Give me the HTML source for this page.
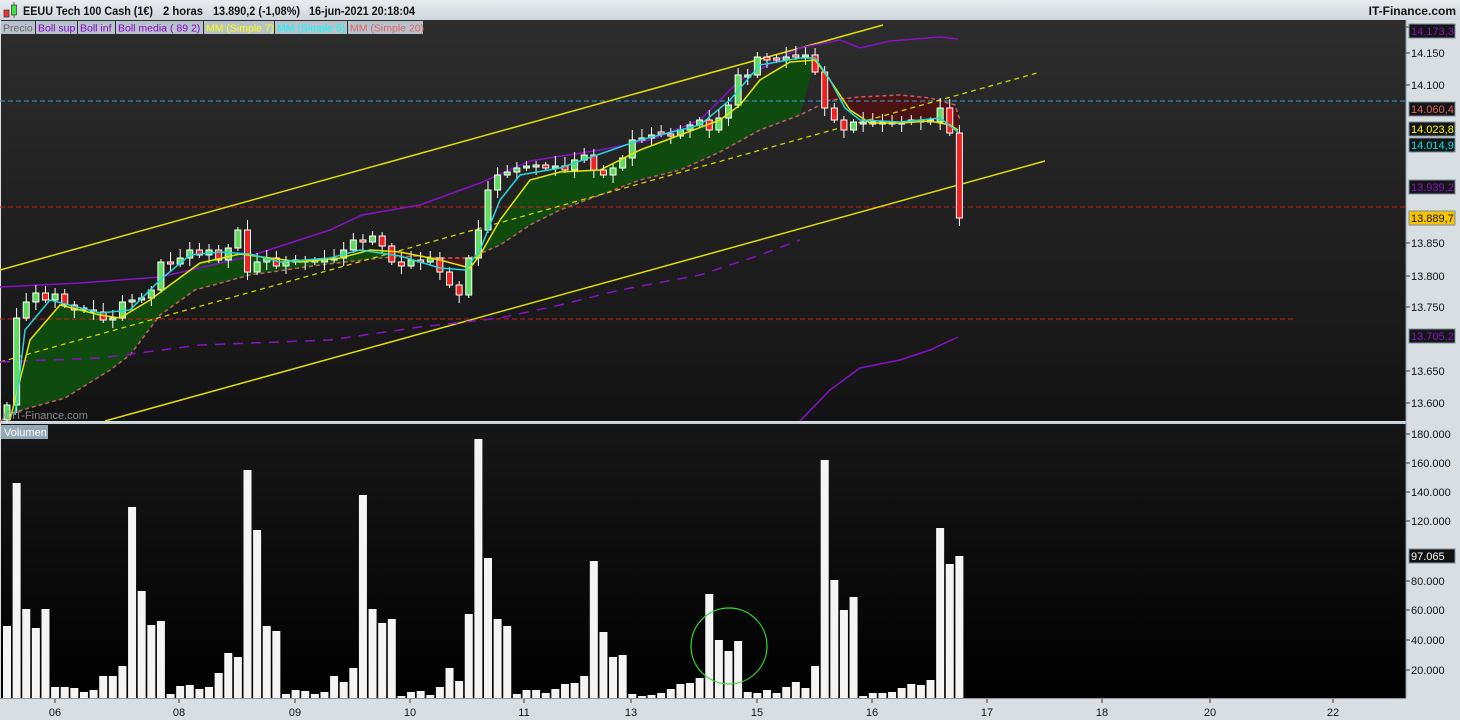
<!DOCTYPE html>
<html><head><meta charset="utf-8"><style>
body{margin:0;width:1460px;height:720px;overflow:hidden;background:#d8dde2;font-family:"Liberation Sans",sans-serif}
svg{position:absolute;left:0;top:0}
</style></head><body>
<svg id="s" width="1460" height="720" xmlns="http://www.w3.org/2000/svg" font-family="Liberation Sans, sans-serif">
<defs>
<linearGradient id="g1" x1="0" y1="0" x2="0" y2="1"><stop offset="0" stop-color="#2d2d2d"/><stop offset="1" stop-color="#131313"/></linearGradient>
<linearGradient id="g2" x1="0" y1="0" x2="0" y2="1"><stop offset="0" stop-color="#171717"/><stop offset="1" stop-color="#000"/></linearGradient>
<linearGradient id="hd" x1="0" y1="0" x2="0" y2="1"><stop offset="0" stop-color="#e8ecef"/><stop offset="1" stop-color="#cfd6dc"/></linearGradient>
</defs>
<rect x="0" y="0" width="1460" height="20" fill="url(#hd)"/>
<rect x="0" y="20" width="1460" height="700" fill="#d9dee3"/>
<rect x="1" y="20" width="1405" height="401" fill="url(#g1)"/>
<rect x="0" y="422" width="1406" height="2" fill="#c8d0d8"/>
<rect x="1" y="424" width="1405" height="274" fill="url(#g2)"/>
<line x1="1406" y1="20" x2="1406" y2="698" stroke="#8a98a4"/>
<line x1="0" y1="698.5" x2="1406" y2="698.5" stroke="#8a98a4"/>
<g id="chart"></g>
<rect x="4" y="10" width="5" height="7" fill="#e33" stroke="#333" stroke-width=".7"/>
<line x1="14" y1="2" x2="14" y2="18" stroke="#333" stroke-width=".7"/>
<rect x="11.5" y="5" width="5" height="10" fill="#4d4" stroke="#333" stroke-width=".7"/>
<g font-size="12" font-weight="bold" fill="#111">
<text x="23" y="15" textLength="130" lengthAdjust="spacingAndGlyphs">EEUU Tech 100 Cash (1€)</text>
<text x="163" y="15" textLength="40" lengthAdjust="spacingAndGlyphs">2 horas</text>
<text x="213" y="15" textLength="87" lengthAdjust="spacingAndGlyphs">13.890,2 (-1,08%)</text>
<text x="309" y="15" textLength="106" lengthAdjust="spacingAndGlyphs">16-jun-2021 20:18:04</text>
</g>
<text x="1456" y="15" font-size="12" font-weight="bold" fill="#111" text-anchor="end">IT-Finance.com</text>
<g font-size="10.5">
<rect x="1" y="21" width="34" height="13" fill="#b7c3cc"/><text x="3" y="31.5" fill="#666">Precio</text>
<rect x="36" y="21" width="41" height="13" fill="#b7c3cc"/><text x="38" y="31.5" fill="#8a00c8">Boll sup</text>
<rect x="78" y="21" width="37" height="13" fill="#b7c3cc"/><text x="80" y="31.5" fill="#8a00c8">Boll inf</text>
<rect x="116" y="21" width="87" height="13" fill="#b7c3cc"/><text x="118" y="31.5" fill="#8a00c8">Boll media ( 89 2)</text>
<rect x="204" y="21" width="70" height="13" fill="#b7c3cc"/><text x="206" y="31.5" fill="#ffff00">MM (Simple 7)</text>
<rect x="275" y="21" width="72" height="13" fill="#b7c3cc"/><text x="277" y="31.5" fill="#00ffff">MM (Simple 5)</text>
<rect x="348" y="21" width="75" height="13" fill="#b7c3cc"/><text x="350" y="31.5" fill="#e06060">MM (Simple 20)</text>
<rect x="1" y="425" width="47" height="14" fill="#94a8b6"/><text x="4" y="436" fill="#fff" font-size="11">Volumen</text>
</g>
<text x="4" y="419" font-size="11" fill="#888">©IT-Finance.com</text>
<g id="axis" font-size="11" fill="#111"></g>
<circle cx="729" cy="646" r="38" fill="none" stroke="#33dd33" stroke-width="1.2"/>
</svg>
<script>
const NS="http://www.w3.org/2000/svg",C=document.getElementById('chart'),A=document.getElementById('axis');
function el(p,t,a,txt){const e=document.createElementNS(NS,t);for(const k in a)e.setAttribute(k,a[k]);if(txt!==undefined)e.textContent=txt;p.appendChild(e);return e;}
function pl(pts,a){el(C,'polyline',Object.assign({points:pts.map(p=>p.join(',')).join(' '),fill:'none'},a));}
const sal=[[0,421],[15,412],[65,398],[110,370],[130,355],[160,315],[195,290],[250,275],[320,265],[380,258],[420,256],[440,258],[470,258],[500,245],[530,225],[560,210],[600,195],[640,180],[680,170],[720,152],[760,130],[800,115],[830,100],[860,97],[900,95],[930,98],[955,105],[960,120]];
const m7=[[10,420],[30,340],[60,305],[100,315],[120,318],[150,300],[170,285],[200,263],[240,254],[270,258],[300,262],[340,258],[370,250],[400,252],[440,260],[470,268],[480,255],[500,220],[530,180],[560,172],[600,170],[640,150],[680,135],[720,120],[740,105],[760,80],[790,62],[815,60],[830,80],[850,110],[870,123],[900,123],[930,121],[950,125],[958,130]];
const m5=[[15,415],[25,330],[50,300],[100,313],[130,310],[160,280],[190,255],[220,252],[250,254],[280,262],[330,258],[360,250],[400,256],[440,268],[465,270],[480,250],[500,200],[520,175],[560,168],[640,140],[700,125],[730,100],[760,65],[800,58],[815,58],[830,80],[845,108],[860,120],[900,122],[940,118],[958,132]];
el(C,'polygon',{points:m7.filter(p=>p[0]<=815).concat(sal.filter(p=>p[0]<=820).reverse()).map(p=>p.join(',')).join(' '),fill:'#0f4a0f'});
el(C,'polygon',{points:'815,60 830,80 850,110 870,123 900,123 930,121 950,125 958,130 962,200 960,120 955,105 930,98 900,95 860,97 830,100 818,75',fill:'#4a1414'});
el(C,'polygon',{points:'380,250 400,252 440,260 470,268 470,258 440,258 420,256 400,256',fill:'#4a1414'});
pl(sal,{stroke:'#c06060','stroke-width':1.5,'stroke-dasharray':'4,3'});
el(C,'line',{x1:0,y1:101,x2:1406,y2:101,stroke:'#3aa0d8','stroke-dasharray':'5,3'});
el(C,'line',{x1:0,y1:207,x2:1406,y2:207,stroke:'#cc1a1a','stroke-dasharray':'5,3'});
el(C,'line',{x1:0,y1:319,x2:1293,y2:319,stroke:'#cc1a1a','stroke-dasharray':'5,3'});
el(C,'line',{x1:0,y1:270,x2:883,y2:25,stroke:'#e0e000','stroke-width':1.5});
el(C,'line',{x1:105,y1:421,x2:1045,y2:161,stroke:'#e0e000','stroke-width':1.5});
el(C,'line',{x1:0,y1:362,x2:1037,y2:73,stroke:'#d0d000','stroke-width':1.3,'stroke-dasharray':'5,4'});
pl([[0,287],[80,283],[160,277],[247,257],[330,230],[362,215],[420,205],[480,183],[530,161],[600,150],[650,140],[700,120],[740,80],[800,48],[840,40],[860,48],[890,41],[940,37],[958,39]],{stroke:'#8a10c8','stroke-width':1.5});
pl([[0,362],[100,358],[200,345],[330,340],[420,327],[500,318],[560,305],[620,290],[700,275],[760,255],[800,240]],{stroke:'#8a10c8','stroke-width':1.5,'stroke-dasharray':'10,8'});
pl([[800,421],[830,390],[860,368],[900,360],[930,350],[958,337]],{stroke:'#8a10c8','stroke-width':1.5});
const cl=[405,318,302,293,300,294,305,310,310,312,320,318,302,300,298,290,262,264,258,250,255,250,260,248,230,272,262,258,266,262,260,262,262,260,258,250,240,242,236,246,262,266,260,262,258,272,285,295,258,230,190,175,172,168,166,165,168,166,170,160,155,170,175,168,158,140,138,135,134,136,130,125,120,130,118,105,75,75,57,60,60,57,57,55,72,108,120,130,122,122,124,122,124,122,122,120,122,108,133,218];
let prev=420;
cl.forEach((c,i)=>{const x=7+9.62*i;let o=prev;if(Math.abs(o-c)<2)o=c+2*(i%2?1:-1);
const top=Math.min(o,c),bot=Math.max(o,c);const hi=top-3-(i*7%8),lo=bot+3+(i*5%10);
el(C,'line',{x1:x,y1:hi,x2:x,y2:lo,stroke:'#fff','stroke-width':1});
el(C,'rect',{x:x-3,y:top,width:6,height:Math.max(bot-top,1.5),fill:c<o?'#5fdc5f':'#ee2222',stroke:'#fff','stroke-width':1});prev=c;});
pl(m7,{stroke:'#e6e600','stroke-width':1.5});
pl(m5,{stroke:'#22d8d8','stroke-width':1.5});
const vt=[626,483,609,628,609,687,687,688,692,690,676,676,666,507,591,625,621,694,686,685,689,687,673,653,657,470,530,626,631,694,690,691,694,692,676,682,668,495,609,623,619,696,692,691,695,687,668,681,614,439,558,619,626,694,690,690,693,689,684,683,676,561,632,657,655,694,696,695,693,689,684,683,678,594,640,651,641,692,693,690,693,687,682,688,666,460,580,610,597,696,693,693,692,688,684,685,680,528,564,556];
vt.forEach((t,i)=>{const x=7+9.62*i;el(C,'rect',{x:x-4,y:t,width:8,height:698-t,fill:'#f4f4f4'});});
const py=[[14.200,27],[14.150,53],[14.100,85],[13.850,243],[13.800,276],[13.750,307],[13.650,371],[13.600,403]];
py.forEach(([v,y])=>{el(A,'line',{x1:1406,y1:y,x2:1410,y2:y,stroke:'#333'});el(A,'text',{x:1411,y:y+4},v.toFixed(3));});
[[180,434],[160,463],[140,492],[120,521],[80,581],[60,610],[40,640],[20,670]].forEach(([v,y])=>{el(A,'line',{x1:1406,y1:y,x2:1410,y2:y,stroke:'#333'});el(A,'text',{x:1411,y:y+4},v+'.000');});
const bx=[[31,'14.173,3','#8a10c8','#151515'],[109,'14.060,4','#e06060','#151515'],[129,'14.023,8','#ffff00','#151515'],[145,'14.014,9','#00e8e8','#151515'],[187,'13.939,2','#8a10c8','#151515'],[218,'13.889,7','#111','#f8c400'],[336,'13.705,2','#8a10c8','#151515'],[556,'97.065','#fff','#111']];
bx.forEach(([y,t,c,b])=>{el(A,'rect',{x:1409,y:y-7,width:46,height:14,fill:b,stroke:'#7890a0'});el(A,'text',{x:1411,y:y+4,fill:c},t);});
[[55,'06'],[179,'08'],[295,'09'],[410,'10'],[524,'11'],[631,'13'],[757,'15'],[872,'16'],[987,'17'],[1102,'18'],[1210,'20'],[1333,'22']].forEach(([x,t])=>{el(A,'line',{x1:x,y1:699,x2:x,y2:703,stroke:'#333'});el(A,'text',{x:x,y:716,'text-anchor':'middle'},t);});
</script>
</body></html>
